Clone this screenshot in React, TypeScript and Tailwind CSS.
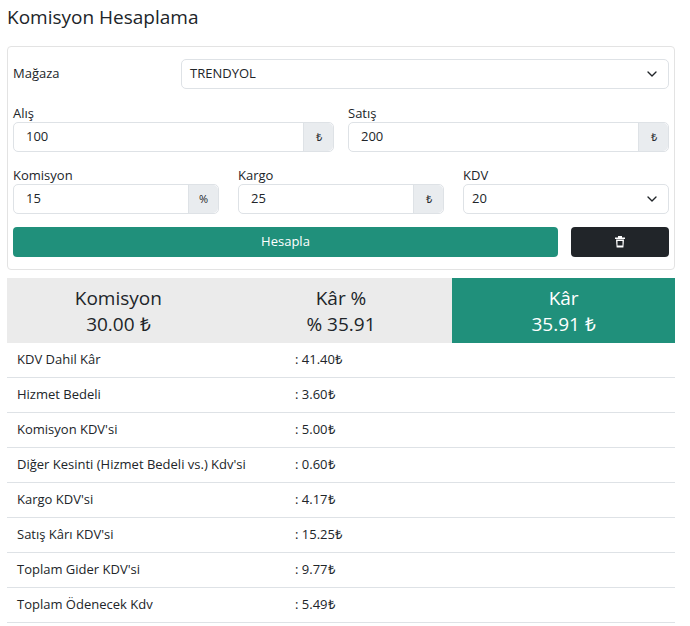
import { ChevronDown } from 'lucide-react'

const rows: [string, string][] = [
  ['KDV Dahil Kâr', ': 41.40₺'],
  ['Hizmet Bedeli', ': 3.60₺'],
  ['Komisyon KDV\'si', ': 5.00₺'],
  ['Diğer Kesinti (Hizmet Bedeli vs.) Kdv\'si', ': 0.60₺'],
  ['Kargo KDV\'si', ': 4.17₺'],
  ['Satış Kârı KDV\'si', ': 15.25₺'],
  ['Toplam Gider KDV\'si', ': 9.77₺'],
  ['Toplam Ödenecek Kdv', ': 5.49₺'],
]

const Field = ({ value, addon }: { value: string; addon: string }) => (
  <div className="flex h-[30px] rounded-[5px] border border-[#dee2e6] text-[13px]">
    <div className="flex flex-1 items-center px-3 text-[#212529]">{value}</div>
    <div className="flex w-[30px] items-center justify-center rounded-r-[5px] border-l border-[#dee2e6] bg-[#e9ecef] text-[11px]">
      {addon}
    </div>
  </div>
)

const Select = ({ value }: { value: string }) => (
  <div className="flex h-[30px] items-center justify-between rounded-[5px] border border-[#dee2e6] px-2 text-[13px] text-[#212529]">
    <span>{value}</span>
    <ChevronDown className="h-4 w-4" strokeWidth={2} />
  </div>
)

export default function App() {
  return (
    <div className="w-[690px] px-[7px] pt-[5px] text-[#212529]" style={{ fontFamily: '"Open Sans", sans-serif' }}>
      <h1 className="mb-[17px] w-[668px] text-[19px] leading-[24px]">Komisyon Hesaplama</h1>

      <div className="w-[668px] rounded-[4px] border border-[#e3e3e3] px-[5px] pb-[12px] pt-[12px]">
        <div className="flex items-center">
          <div className="w-[168px] text-[13px]">Mağaza</div>
          <div className="flex-1">
            <Select value="TRENDYOL" />
          </div>
        </div>

        <div className="mt-[16px] grid grid-cols-2 gap-[14px]">
          <div>
            <div className="mb-[1px] text-[13px] leading-[16px]">Alış</div>
            <Field value="100" addon="₺" />
          </div>
          <div>
            <div className="mb-[1px] text-[13px] leading-[16px]">Satış</div>
            <Field value="200" addon="₺" />
          </div>
        </div>

        <div className="mt-[15px] grid grid-cols-3 gap-[19px]">
          <div>
            <div className="mb-[1px] text-[13px] leading-[16px]">Komisyon</div>
            <Field value="15" addon="%" />
          </div>
          <div>
            <div className="mb-[1px] text-[13px] leading-[16px]">Kargo</div>
            <Field value="25" addon="₺" />
          </div>
          <div>
            <div className="mb-[1px] text-[13px] leading-[16px]">KDV</div>
            <Select value="20" />
          </div>
        </div>

        <div className="mt-[13px] flex gap-[13px]">
          <div className="flex h-[30px] flex-1 items-center justify-center rounded-[4px] bg-[#20907b] text-[13px] text-white">
            Hesapla
          </div>
          <div className="flex h-[30px] w-[98px] items-center justify-center rounded-[4px] bg-[#212529]">
            <svg width="10" height="12" viewBox="0 0 10 12" fill="white">
              <rect x="0" y="1.5" width="10" height="1.5" />
              <rect x="3" y="0" width="4" height="2" />
              <path d="M1 3.5h8l-.6 8H1.6z" />
              <rect x="2.5" y="5" width="5" height="4.5" fill="#212529" />
            </svg>
          </div>
        </div>
      </div>

      <div className="mt-[8px] grid w-[668px] grid-cols-3 text-[19px]">
        <div className="flex h-[65px] flex-col items-center justify-center bg-[#ebebeb] leading-[26px]">
          <div>Komisyon</div>
          <div>30.00 ₺</div>
        </div>
        <div className="flex h-[65px] flex-col items-center justify-center bg-[#ebebeb] leading-[26px]">
          <div>Kâr %</div>
          <div>% 35.91</div>
        </div>
        <div className="flex h-[65px] flex-col items-center justify-center bg-[#20907b] leading-[26px] text-white">
          <div>Kâr</div>
          <div>35.91 ₺</div>
        </div>
      </div>

      <div className="w-[668px] text-[13px]">
        {rows.map(([k, v]) => (
          <div key={k} className="flex h-[35px] items-center border-b border-[#dee2e6] px-[10px]">
            <div className="w-[278px]">{k}</div>
            <div>{v}</div>
          </div>
        ))}
      </div>
    </div>
  )
}
